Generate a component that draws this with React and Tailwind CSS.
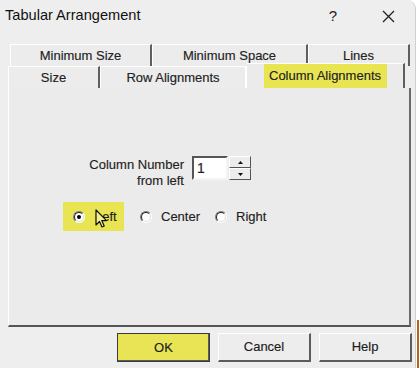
import React from 'react';

const Radio = ({ checked }) => (
    <span className="relative w-[12px] h-[12px] rounded-full shrink-0 border border-t-[#7a7a7a] border-l-[#7a7a7a] border-r-white border-b-white bg-white">
        <span className="absolute inset-0 rounded-full border border-t-[#222] border-l-[#222] border-r-[#dcdcdc] border-b-[#dcdcdc]"></span>
        {checked && <span className="absolute left-[3px] top-[3px] w-[4px] h-[4px] rounded-full bg-black"></span>}
    </span>
);

const Tab = ({ label, width, className = '' }) => (
    <div className={`h-full flex items-center justify-center border-t border-l border-t-white border-l-white border-r-2 border-r-[#5f5f5f] bg-[#ececec] ${className}`} style={{ width }}>
        {label}
    </div>
);

const Button = ({ label, primary }) => (
    <button className={`w-[93px] h-[29px] flex items-center justify-center text-[13px] text-[#1c1c1c] [-webkit-text-stroke:0.15px_#1c1c1c] ${primary ? 'bg-[#e8e455] border border-[#3a3a3a] shadow-[inset_-1px_-1px_0_#5a5a5a]' : 'bg-[#ededed] border border-t-white border-l-white border-r-2 border-b-2 border-r-[#5c5c5c] border-b-[#5c5c5c]'}`}>
        {label}
    </button>
);

const App = () => {
    return (
        <div className="w-[420px] h-[368px] bg-white overflow-hidden relative font-['Liberation_Sans',Arial,sans-serif] text-[#1e1e1e]">
            <div className="w-[416px] h-full bg-[#eeeeee] rounded-tr-[9px] border-r border-[#cfcfcf] flex flex-col">
                {/* Title bar */}
                <div className="h-[32px] flex items-center pl-[5px] shrink-0">
                    <span className="text-[14.6px] text-[#111]">Tabular Arrangement</span>
                    <span className="ml-auto text-[15px] text-[#222] mr-[45px]">?</span>
                    <svg width="13" height="13" viewBox="0 0 13 13" className="mr-[20px]">
                        <path d="M1 1 L12 12 M12 1 L1 12" stroke="#222" strokeWidth="1.3" />
                    </svg>
                </div>

                {/* Tabs */}
                <div className="mt-[12px] text-[13px] text-[#222] [-webkit-text-stroke:0.15px_#222]">
                    <div className="h-[22px] flex pl-[10px]">
                        <Tab label="Minimum Size" width={142} />
                        <Tab label="Minimum Space" width={156} />
                        <Tab label="Lines" width={102} />
                    </div>
                    <div className="h-[22px] flex pl-[8px] items-end">
                        <Tab label="Size" width={92} />
                        <Tab label="Row Alignments" width={147} className="border-r border-r-white" />
                        <div className="w-[158px] h-[25px] -mt-[3px] flex items-center justify-center border-t border-t-white border-r-2 border-r-[#5f5f5f] bg-[#ebebeb]">
                            <span className="bg-[#e9e552] h-[24px] w-[123px] flex items-center justify-center">Column Alignments</span>
                        </div>
                    </div>
                </div>

                {/* Panel */}
                <div className="ml-[8px] w-[403px] h-[239px] bg-[#ebebeb] border-l border-l-white border-r-2 border-r-[#6a6a6a] border-b-2 border-b-[#555] text-[13px] text-[#1e1e1e] [-webkit-text-stroke:0.15px_#1e1e1e]">
                    <div className="flex items-start pl-[74px] pt-[68px]">
                        <div className="w-[101px] text-right leading-[16px] pt-[1px]">
                            <div>Column Number</div>
                            <div>from left</div>
                        </div>
                        <div className="ml-[8px] w-[36px] h-[24px] bg-white border-2 border-t-[#555] border-l-[#555] border-r-[#f4f4f4] border-b-[#f4f4f4] flex items-center pl-[3px] text-[14px] leading-none">
                            1
                        </div>
                        <div className="ml-[1px] w-[22px] h-[24px] flex flex-col">
                            <div className="h-[12px] bg-[#ececec] border border-t-white border-l-white border-r-[#555] border-b-[#555] flex items-center justify-center">
                                <svg width="5" height="3" viewBox="0 0 5 3"><path d="M2.5 0 L5 3 L0 3 Z" fill="#111" /></svg>
                            </div>
                            <div className="h-[12px] bg-[#ececec] border border-t-white border-l-white border-r-[#555] border-b-[#555] flex items-center justify-center">
                                <svg width="5" height="3" viewBox="0 0 5 3"><path d="M0 0 L5 0 L2.5 3 Z" fill="#111" /></svg>
                            </div>
                        </div>
                    </div>

                    <div className="flex items-center pl-[54px] mt-[13px] relative">
                        <div className="h-[29px] w-[61px] bg-[#e9e552] flex items-center pl-[10px] gap-[10px]">
                            <Radio checked />
                            <span>Left</span>
                        </div>
                        <div className="flex items-center ml-[16px] gap-[9px]">
                            <Radio />
                            <span>Center</span>
                        </div>
                        <div className="flex items-center ml-[15px] gap-[9px]">
                            <Radio />
                            <span>Right</span>
                        </div>
                        {/* mouse cursor */}
                        <svg width="13" height="20" viewBox="0 0 13 20" className="absolute left-[86px] top-[7px]">
                            <path d="M1 1 L1 16 L4.5 12.5 L7 18 L9.2 17 L6.8 11.6 L11.5 11.6 Z" fill="#f3ef8c" stroke="#111" strokeWidth="1.2" strokeLinejoin="round" />
                        </svg>
                    </div>
                </div>

                {/* Buttons */}
                <div className="flex pl-[117px] gap-[8px] mt-[6px]">
                    <Button label="OK" primary />
                    <Button label="Cancel" />
                    <Button label="Help" />
                </div>
            </div>
            <div className="absolute right-[1px] top-[320px] w-[2px] h-[48px] bg-[#b5651d]"></div>
        </div>
    );
};

export default App;
